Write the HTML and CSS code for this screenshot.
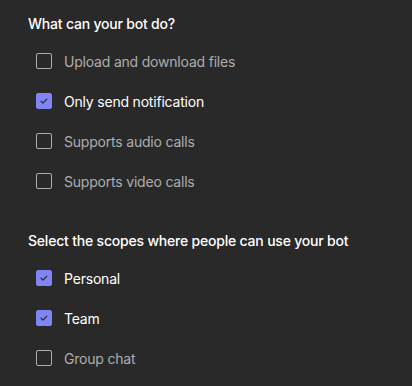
FILE: index.html
```html
<!DOCTYPE html>
<html lang="en">
<head>
  <meta charset="UTF-8">
  <meta name="viewport" content="width=device-width, initial-scale=1.0">
  <link rel="stylesheet" href="styles.css">
</head>
<body>
  <div class="panel">
    <div class="group">
      <h3>What can your bot do?</h3>
      <label class="option"><span class="box"></span><span class="text">Upload and download files</span></label>
      <label class="option checked"><span class="box"><svg viewBox="0 0 16 16"><path d="M4.6 8.2l2.2 2.2 4.4-4.6"/></svg></span><span class="text">Only send notification</span></label>
      <label class="option"><span class="box"></span><span class="text">Supports audio calls</span></label>
      <label class="option"><span class="box"></span><span class="text">Supports video calls</span></label>
    </div>
    <div class="group">
      <h3>Select the scopes where people can use your bot</h3>
      <label class="option checked"><span class="box"><svg viewBox="0 0 16 16"><path d="M4.6 8.2l2.2 2.2 4.4-4.6"/></svg></span><span class="text">Personal</span></label>
      <label class="option checked"><span class="box"><svg viewBox="0 0 16 16"><path d="M4.6 8.2l2.2 2.2 4.4-4.6"/></svg></span><span class="text">Team</span></label>
      <label class="option"><span class="box"></span><span class="text">Group chat</span></label>
    </div>
  </div>
</body>
</html>
```
FILE: styles.css
```css
html, body {
  margin: 0;
  background-color: #292929;
}
body {
  font-family: "Inter", "Liberation Sans", sans-serif;
  font-size: 14px;
  letter-spacing: -0.2px;
  color: #ffffff;
}
.panel {
  padding: 12px 0 0 28px;
}
.group + .group {
  margin-top: 28px;
}
h3 {
  margin: 0;
  height: 24px;
  line-height: 24px;
  font-size: 14px;
  font-weight: 500;
}
.option {
  display: flex;
  align-items: center;
  height: 40px;
  padding-left: 8px;
  color: #adadad;
}
.group h3 + .option {
  margin-top: 5px;
}
.box {
  box-sizing: border-box;
  width: 16px;
  height: 16px;
  border: 1px solid #adadad;
  border-radius: 2px;
  margin-right: 12px;
  display: flex;
}
.box svg {
  width: 14px;
  height: 14px;
  fill: none;
  stroke: #292929;
  stroke-width: 1.4;
  stroke-linecap: round;
  stroke-linejoin: round;
}
.option.checked {
  color: #ffffff;
}
.option.checked .box {
  background-color: #7f85f5;
  border-color: #7f85f5;
}
```
